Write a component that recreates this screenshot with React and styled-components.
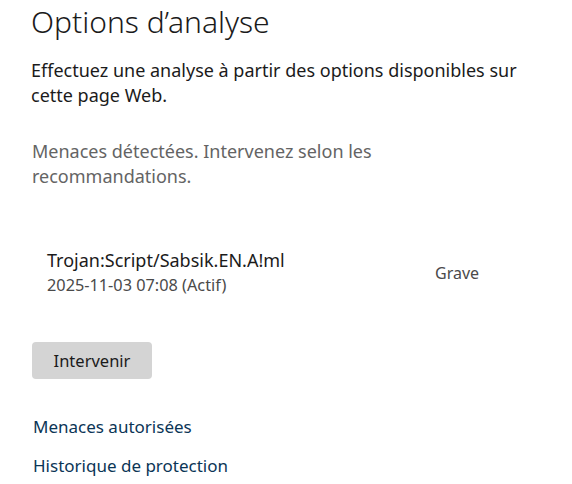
import styled, { createGlobalStyle } from "styled-components";

const GlobalStyle = createGlobalStyle`
  body {
    margin: 0;
    background: #ffffff;
    font-family: "Noto Sans", "Open Sans", sans-serif;
  }
`;

const Page = styled.div`
  padding: 2px 0 0 31px;
  width: 572px;
  height: 484px;
  box-sizing: border-box;
  overflow: hidden;
`;

const Title = styled.h1`
  margin: 0;
  font-size: 30px;
  font-weight: 300;
  color: #1b1b1b;
  line-height: 40px;
`;

const Lead = styled.p`
  margin: 16px 0 0;
  font-size: 18px;
  line-height: 25px;
  color: #1b1b1b;
  max-width: 510px;
`;

const Status = styled.p`
  margin: 31px 0 0 1px;
  font-size: 18px;
  line-height: 25px;
  color: #646464;
  max-width: 380px;
`;

const ThreatRow = styled.div`
  display: grid;
  grid-template-columns: 388px auto;
  align-items: center;
  margin: 58px 0 0 16px;
`;

const ThreatInfo = styled.div`
  display: flex;
  flex-direction: column;
`;

const ThreatName = styled.span`
  font-size: 18px;
  line-height: 26px;
  color: #1b1b1b;
`;

const ThreatDate = styled.span`
  font-size: 16.3px;
  line-height: 25px;
  color: #4a4a4a;
`;

const Severity = styled.span`
  font-size: 16px;
  color: #4a4a4a;
`;

const ActionButton = styled.button`
  display: block;
  margin: 44px 0 0 1px;
  width: 120px;
  height: 37px;
  padding: 0;
  border: none;
  border-radius: 4px;
  background: #d4d4d4;
  font-family: inherit;
  font-size: 16.5px;
  color: #1b1b1b;
`;

const Links = styled.div`
  display: flex;
  flex-direction: column;
  gap: 13px;
  margin: 35px 0 0 2px;
`;

const Link = styled.a`
  font-size: 17px;
  line-height: 26px;
  color: #0b3556;
  text-decoration: none;
`;

export default function App() {
  return (
    <Page>
      <GlobalStyle />
      <Title>Options d’analyse</Title>
      <Lead>
        Effectuez une analyse à partir des options disponibles sur cette page Web.
      </Lead>
      <Status>Menaces détectées. Intervenez selon les recommandations.</Status>
      <ThreatRow>
        <ThreatInfo>
          <ThreatName>Trojan:Script/Sabsik.EN.A!ml</ThreatName>
          <ThreatDate>2025-11-03 07:08 (Actif)</ThreatDate>
        </ThreatInfo>
        <Severity>Grave</Severity>
      </ThreatRow>
      <ActionButton>Intervenir</ActionButton>
      <Links>
        <Link href="#">Menaces autorisées</Link>
        <Link href="#">Historique de protection</Link>
      </Links>
    </Page>
  );
}
